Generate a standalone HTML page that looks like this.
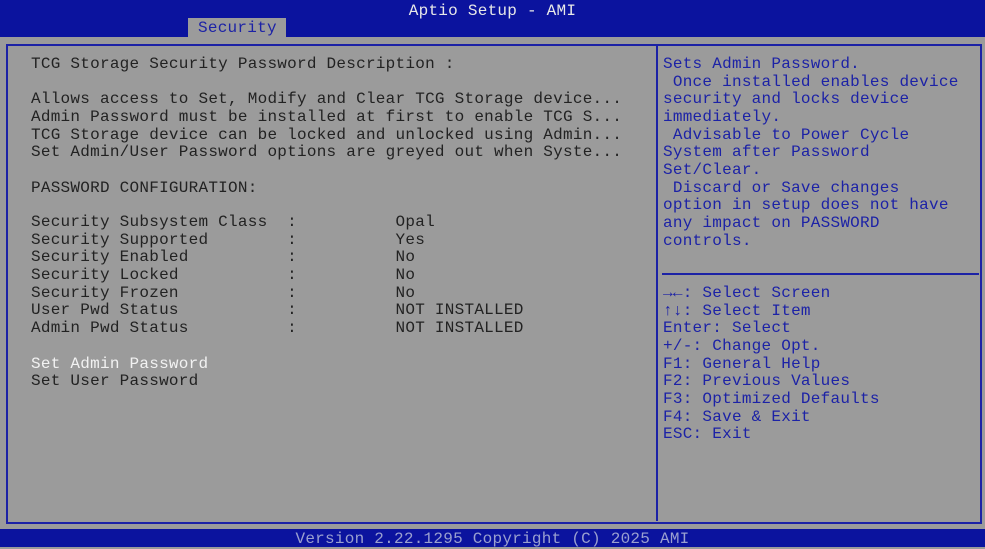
<!DOCTYPE html><html><head><style>
body{margin:0;width:985px;height:547px;background:#9b9b9b;position:relative;overflow:hidden;font-family:"Liberation Mono","DejaVu Sans Mono",monospace;font-size:16px;letter-spacing:0.25px}
.t{position:absolute;white-space:pre;line-height:17.65px;color:#222}
.b{color:#1c22a6}
.w{color:#f2f2f2}
</style></head><body>
<div style="position:absolute;left:0;top:0;width:985px;height:37px;background:#0b139e"></div>
<div class="t" style="left:0;width:985px;text-align:center;top:3px;color:#e8e8e8">Aptio Setup - AMI</div>
<div style="position:absolute;left:188px;top:18px;width:98px;height:19px;background:#9b9b9b"></div>
<div class="t b" style="left:198px;top:20px">Security</div>
<div style="position:absolute;left:0;top:529px;width:985px;height:18px;background:#0b139e"></div>
<div class="t" style="left:0;width:985px;text-align:center;top:531px;color:#9aa0d0">Version 2.22.1295 Copyright (C) 2025 AMI</div>
<div style="position:absolute;left:6px;top:44px;width:972px;height:476px;border:2px solid #1c22a6"></div>
<div style="position:absolute;left:656px;top:45px;width:2px;height:476px;background:#1c22a6"></div>
<div style="position:absolute;left:662px;top:273px;width:317px;height:2px;background:#1c22a6"></div>
<div class="t" style="left:31px;top:56px">TCG Storage Security Password Description :

Allows access to Set, Modify and Clear TCG Storage device...
Admin Password must be installed at first to enable TCG S...
TCG Storage device can be locked and unlocked using Admin...
Set Admin/User Password options are greyed out when Syste...

PASSWORD CONFIGURATION:</div>
<div class="t" style="left:31px;top:214px">Security Subsystem Class  :          Opal
Security Supported        :          Yes
Security Enabled          :          No
Security Locked           :          No
Security Frozen           :          No
User Pwd Status           :          NOT INSTALLED
Admin Pwd Status          :          NOT INSTALLED</div>
<div class="t w" style="left:31px;top:356px">Set Admin Password</div>
<div class="t" style="left:31px;top:373px">Set User Password</div>
<div class="t b" style="left:663px;top:56px">Sets Admin Password.
 Once installed enables device
security and locks device
immediately.
 Advisable to Power Cycle
System after Password
Set/Clear.
 Discard or Save changes
option in setup does not have
any impact on PASSWORD
controls.</div>
<div class="t b" style="left:663px;top:285px"><b>→←</b>: Select Screen
<b>↑↓</b>: Select Item
Enter: Select
+/-: Change Opt.
F1: General Help
F2: Previous Values
F3: Optimized Defaults
F4: Save &amp; Exit
ESC: Exit</div>
</body></html>
